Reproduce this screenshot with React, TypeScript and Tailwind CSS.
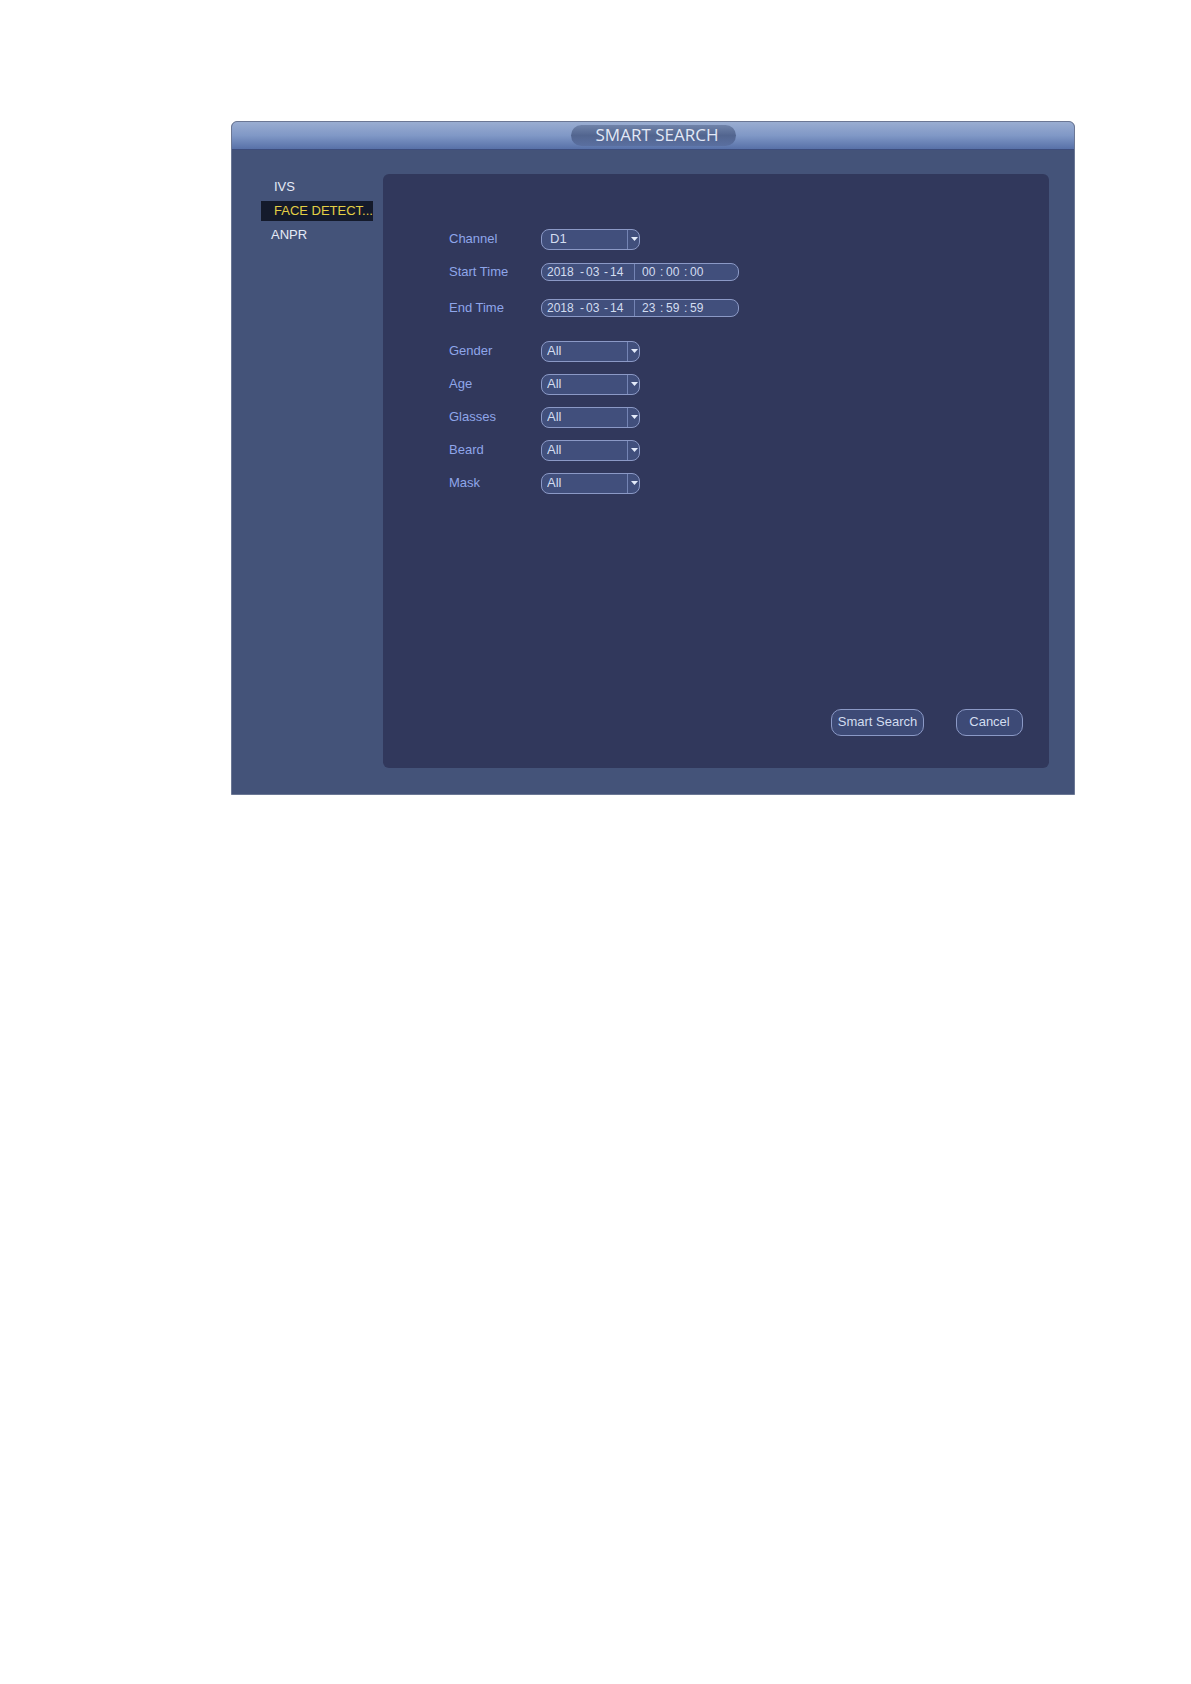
import { useState } from 'react';

interface FilterField {
  id: string;
  label: string;
  options: string[];
}

const menuItems = [
  { name: 'IVS', indent: 'pl-[13px]' },
  { name: 'FACE DETECT...', indent: 'pl-[13px]' },
  { name: 'ANPR', indent: 'pl-[10px]' },
];

const filters: FilterField[] = [
  { id: 'gender', label: 'Gender', options: ['All', 'Male', 'Female'] },
  { id: 'age', label: 'Age', options: ['All', 'Young', 'Middle', 'Old'] },
  { id: 'glasses', label: 'Glasses', options: ['All', 'Yes', 'No'] },
  { id: 'beard', label: 'Beard', options: ['All', 'Yes', 'No'] },
  { id: 'mask', label: 'Mask', options: ['All', 'Yes', 'No'] },
];

function SelectField({
  id,
  label,
  options,
  inset = 'pl-[5px]',
}: FilterField & { inset?: string }) {
  return (
    <div className="flex h-[21px] items-center">
      <label htmlFor={id} className="w-[92px] shrink-0 pb-px text-[#8fa6ea]">
        {label}
      </label>
      <div className="relative h-full w-[99px]">
        <select
          id={id}
          className={`h-full w-full appearance-none rounded-lg border border-[#8b99c6] bg-[#414f7c] pr-4 pb-px leading-4 text-[#d3ddf0] outline-none ${inset}`}
        >
          {options.map((option) => (
            <option key={option}>{option}</option>
          ))}
        </select>
        {/* Arrow cell */}
        <span className="pointer-events-none absolute inset-y-px right-0 flex w-[13px] items-center border-l border-[#7484b4] pb-px pl-[3px]">
          <svg width="7" height="4" viewBox="0 0 7 4" fill="#e4ebfa" aria-hidden="true">
            <path d="M0 0h7L3.5 4z" />
          </svg>
        </span>
      </div>
    </div>
  );
}

function Segment({ label, value, wide }: { label: string; value: string; wide?: boolean }) {
  return (
    <input
      type="text"
      aria-label={label}
      defaultValue={value}
      className={`bg-transparent text-xs text-[#d3ddf0] outline-none ${wide ? 'w-[33px]' : 'w-[18px]'}`}
    />
  );
}

function DateTimeField({ label, date, time }: { label: string; date: string[]; time: string[] }) {
  return (
    <fieldset className="flex h-[21px] items-center" aria-label={label}>
      <span className="w-[92px] shrink-0 text-[#8fa6ea]">{label}</span>
      <div className="flex h-full w-[198px] items-center rounded-lg border border-[#8b99c6] bg-[#414f7c] text-xs text-[#d3ddf0]">
        <div className="flex h-full w-[93px] items-center border-r border-[#7484b4] pl-[5px]">
          <Segment label={`${label} year`} value={date[0]} wide />
          <span className="w-[6px]">-</span>
          <Segment label={`${label} month`} value={date[1]} />
          <span className="w-[6px]">-</span>
          <Segment label={`${label} day`} value={date[2]} />
        </div>
        <div className="flex h-full items-center pl-[7px]">
          <Segment label={`${label} hour`} value={time[0]} />
          <span className="w-[6px]">:</span>
          <Segment label={`${label} minute`} value={time[1]} />
          <span className="w-[6px]">:</span>
          <Segment label={`${label} second`} value={time[2]} />
        </div>
      </div>
    </fieldset>
  );
}

export default function App() {
  const [active, setActive] = useState('FACE DETECT...');

  return (
    <div className="min-h-screen bg-white pt-[121px] pr-[116px] pb-12 pl-[231px] font-['Liberation_Sans',Arial,sans-serif] text-[13px]">
      <div className="overflow-hidden rounded-t-md border border-[#6b7794] bg-[#445379]">
        <header className="flex h-[27px] items-center justify-center bg-linear-to-b from-[#9aadd1] via-[#8098c6] to-[#5871a8]">
          <h1 className="flex h-[21px] w-[165px] items-center justify-center rounded-full bg-linear-to-b from-[#7083a9] via-[#52658f] to-[#5a6fa0] pb-0.5 pl-2 font-['Open_Sans','Noto_Sans',sans-serif] text-[17px] leading-5 text-[#e2e8f6]">
            SMART SEARCH
          </h1>
        </header>

        <div className="flex border-t border-[#3d4d7c] pt-[24px] pr-[25px] pb-[26px]">
          <nav className="flex w-[151px] shrink-0 flex-col gap-1 pt-[3px] pr-[10px] pl-[29px]">
            {menuItems.map((item) => (
              <button
                key={item.name}
                type="button"
                onClick={() => setActive(item.name)}
                className={`h-5 text-left whitespace-nowrap ${item.indent} ${
                  active === item.name ? 'bg-[#141a2b] text-[#e3cf45]' : 'text-[#e4eaf6]'
                }`}
              >
                {item.name}
              </button>
            ))}
          </nav>

          <form
            className="flex flex-1 flex-col rounded-md bg-[#31385c] pt-[55px] pr-[26px] pb-8 pl-[66px]"
            onSubmit={(e) => e.preventDefault()}
          >
            <SelectField id="channel" label="Channel" options={['D1', 'D2', 'D3', 'D4']} inset="pl-2" />
            <div className="mt-3 flex flex-col gap-[15px]">
              <DateTimeField label="Start Time" date={['2018', '03', '14']} time={['00', '00', '00']} />
              <DateTimeField label="End Time" date={['2018', '03', '14']} time={['23', '59', '59']} />
            </div>
            <div className="mt-[22px] flex flex-col gap-3">
              {filters.map((filter) => (
                <SelectField key={filter.id} {...filter} />
              ))}
            </div>

            <div className="mt-[215px] flex justify-end gap-8">
              <button
                type="submit"
                className="h-[27px] w-[93px] rounded-[10px] border border-[#8b99c6] bg-[#3d4a76] pb-px whitespace-nowrap text-[#d3ddf0]"
              >
                Smart Search
              </button>
              <button
                type="button"
                className="h-[27px] w-[67px] rounded-[10px] border border-[#8b99c6] bg-[#3d4a76] pb-px text-[#d3ddf0]"
              >
                Cancel
              </button>
            </div>
          </form>
        </div>
      </div>
    </div>
  );
}
